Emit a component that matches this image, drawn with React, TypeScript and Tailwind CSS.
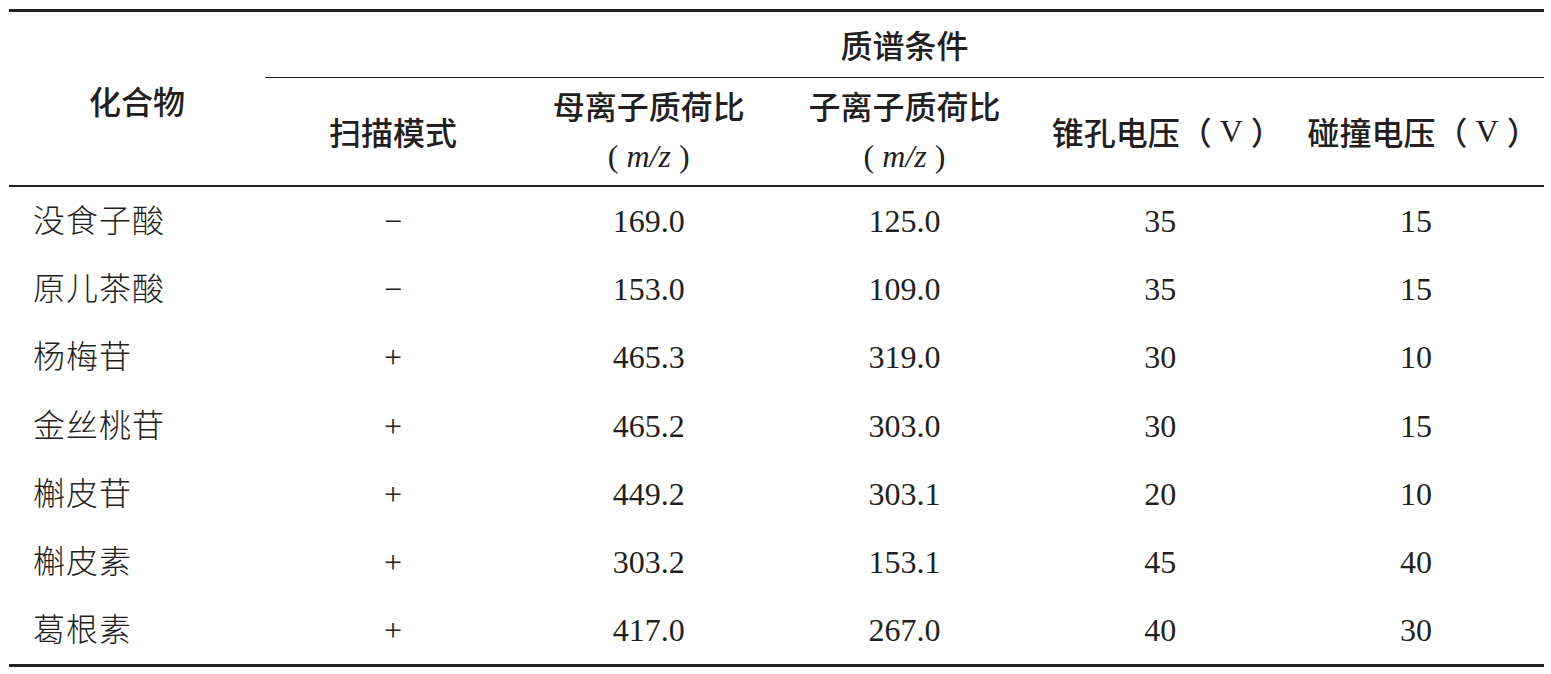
import React from "react";

const rows: [string, string, string, string, string, string][] = [
  ["没食子酸", "−", "169.0", "125.0", "35", "15"],
  ["原儿茶酸", "−", "153.0", "109.0", "35", "15"],
  ["杨梅苷", "+", "465.3", "319.0", "30", "10"],
  ["金丝桃苷", "+", "465.2", "303.0", "30", "15"],
  ["槲皮苷", "+", "449.2", "303.1", "20", "10"],
  ["槲皮素", "+", "303.2", "153.1", "45", "40"],
  ["葛根素", "+", "417.0", "267.0", "40", "30"],
];

const sans = "font-['Noto_Sans_CJK_SC',sans-serif]";
const serif = "font-['Liberation_Serif','Noto_Sans_CJK_SC',serif]";

export default function App() {
  return (
    <div className="w-[1551px] h-[674px] bg-white text-[#231f20] pt-[9px] pl-[9px]">
      <div className="w-[1535px]">
        <div className="border-t-[3px] border-[#231f20]" />
        {/* header */}
        <div className={`flex ${sans} text-[32px] font-medium`}>
          <div className="w-[256px] h-[173px] flex items-center justify-center">
            <span className="mt-[2px]">化合物</span>
          </div>
          <div className="flex-1 flex flex-col">
            <div className="h-[66px] flex items-center justify-center border-b border-[#231f20]">
              <span className="-mt-[2px]">质谱条件</span>
            </div>
            <div className="h-[106px] grid grid-cols-5">
              <div className="flex items-center justify-center">扫描模式</div>
              <div className="flex flex-col items-center justify-center leading-[51px]">
                <span>母离子质荷比</span>
                <span className={`${serif} font-normal`}>
                  ( <i>m/z</i> )
                </span>
              </div>
              <div className="flex flex-col items-center justify-center leading-[51px]">
                <span>子离子质荷比</span>
                <span className={`${serif} font-normal`}>
                  ( <i>m/z</i> )
                </span>
              </div>
              <div className="flex items-center justify-center pl-[14px]">
                锥孔电压（<span className={`${serif} font-normal mx-[8px]`}>V</span>）
              </div>
              <div className="flex items-center justify-center pl-[14px]">
                碰撞电压（<span className={`${serif} font-normal mx-[8px]`}>V</span>）
              </div>
            </div>
          </div>
        </div>
        <div className="border-t-2 border-[#231f20]" />
        {/* body */}
        <div className={`${serif} text-[32px]`}>
          {rows.map((r) => (
            <div key={r[0]} className="h-[68.2px] grid grid-cols-[256px_repeat(5,1fr)] items-center">
              <div className="pl-[24px] font-light tracking-[1px]">{r[0]}</div>
              {r.slice(1).map((c, i) => (
                <div key={i} className="text-center">
                  {c}
                </div>
              ))}
            </div>
          ))}
        </div>
        <div className="border-t-[3px] border-[#231f20]" />
      </div>
    </div>
  );
}
